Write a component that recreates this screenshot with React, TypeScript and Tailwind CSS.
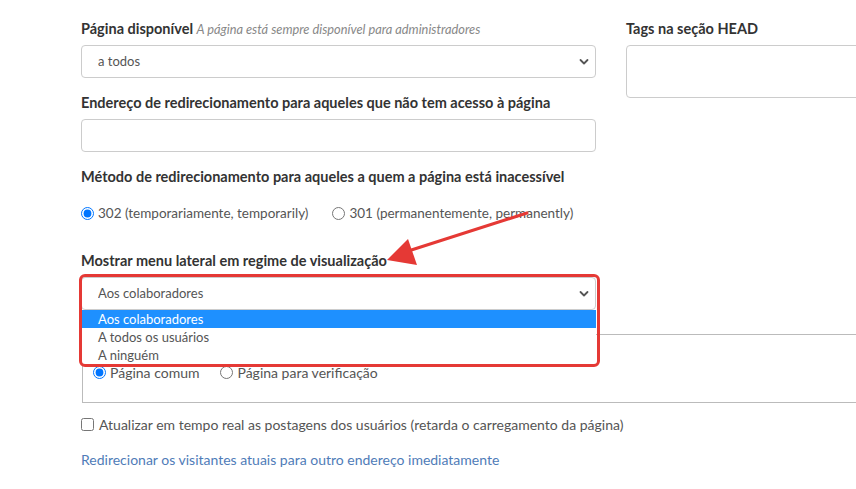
import React from "react";

/** Small chevron drawn on top of the native select */
function Chevron() {
  return (
    <svg
      className="pointer-events-none absolute right-[7px] top-1/2 -translate-y-1/2"
      width="10"
      height="7"
      viewBox="0 0 10 7"
      fill="none"
      aria-hidden="true"
    >
      <path d="M1.5 1.5 5 5l3.5-3.5" stroke="#555" strokeWidth="1.8" strokeLinecap="round" strokeLinejoin="round" />
    </svg>
  );
}

function Label({ children }: { children: React.ReactNode }) {
  return <div className="text-[14.5px] font-bold leading-[18px] text-[#333]">{children}</div>;
}

function Select({ value, options }: { value: string; options: string[] }) {
  return (
    <div className="relative">
      <select
        defaultValue={value}
        className="h-[33px] w-full appearance-none rounded-[4px] border border-[#ccc] bg-white pl-[16px] text-[13px] text-[#555] outline-none"
      >
        {options.map((o) => (
          <option key={o}>{o}</option>
        ))}
      </select>
      <Chevron />
    </div>
  );
}

function Radio({
  name,
  checked,
  size = "text-[14px]",
  children,
}: {
  name: string;
  checked?: boolean;
  size?: string;
  children: React.ReactNode;
}) {
  return (
    <label className={`flex items-center gap-[4px] text-[#555] ${size}`}>
      <input type="radio" name={name} defaultChecked={checked} className="m-0 h-[13px] w-[13px]" />
      <span>{children}</span>
    </label>
  );
}

const sideMenuOptions = ["Aos colaboradores", "A todos os usuários", "A ninguém"];

export default function App() {
  return (
    <div
      className="relative h-[489px] w-[856px] overflow-hidden bg-white"
      style={{ fontFamily: "Lato, 'Open Sans', sans-serif" }}
    >
      <div className="w-[940px] pl-[81px] pt-[20px]">
        {/* Two columns: page settings + HEAD tags */}
        <div className="flex gap-[30px]">
          <div className="w-[515px] shrink-0">
            <Label>
              Página disponível{" "}
              <span className="text-[12.8px] font-normal italic text-[#888]">
                A página está sempre disponível para administradores
              </span>
            </Label>
            <div className="mt-[7px]">
              <Select value="a todos" options={["a todos", "aos usuários registrados"]} />
            </div>

            <div className="mt-[16px]">
              <Label>Endereço de redirecionamento para aqueles que não tem acesso à página</Label>
            </div>
            <input
              type="text"
              className="mt-[7px] block h-[33px] w-full rounded-[4px] border border-[#ccc] bg-white outline-none"
            />

            <div className="mt-[16px]">
              <Label>Método de redirecionamento para aqueles a quem a página está inacessível</Label>
            </div>
            <div className="mt-[18px] flex h-[18px] items-center gap-[24px]">
              <Radio name="redirect" checked size="text-[13.5px]">
                302 (temporariamente, temporarily)
              </Radio>
              <Radio name="redirect" size="text-[13.5px]">
                301 (permanentemente, permanently)
              </Radio>
            </div>

            <div className="mt-[30px]">
              <Label>Mostrar menu lateral em regime de visualização</Label>
            </div>
            <div className="relative mt-[7px]">
              <Select value="Aos colaboradores" options={sideMenuOptions} />
              {/* Opened dropdown list */}
              <div className="absolute left-0 right-0 top-full z-10 bg-white pb-[1px] text-[13px] text-[#555]">
                {sideMenuOptions.map((o, i) => (
                  <div
                    key={o}
                    className={
                      i === 0
                        ? "h-[18px] bg-[#1e90ff] pl-[17px] leading-[18px] text-white"
                        : "h-[18px] pl-[17px] leading-[18px]"
                    }
                  >
                    {o}
                  </div>
                ))}
              </div>
            </div>
          </div>

          <div className="flex-1">
            <Label>Tags na seção HEAD</Label>
            <textarea className="mt-[7px] block h-[53px] w-full resize-none rounded-[4px] border border-[#ccc] bg-white outline-none" />
          </div>
        </div>

        {/* Page type box */}
        <div className="ml-[1px] mt-[24px] h-[69px] border border-[#bbb] pl-[10px] pt-[27px]">
          <div className="flex items-center gap-[21px]">
            <Radio name="type" checked>
              Página comum
            </Radio>
            <Radio name="type">Página para verificação</Radio>
          </div>
        </div>

        <label className="mt-[12px] flex h-[18px] items-center gap-[5px] text-[14px] text-[#555]">
          <input type="checkbox" className="m-0 h-[13px] w-[13px]" />
          <span>Atualizar em tempo real as postagens dos usuários (retarda o carregamento da página)</span>
        </label>

        <a href="#" className="mt-[18px] block text-[14px] leading-[18px] text-[#4f7cb8]">
          Redirecionar os visitantes atuais para outro endereço imediatamente
        </a>
      </div>

      {/* Annotation: red frame around the dropdown */}
      <div className="pointer-events-none absolute left-[79px] top-[274px] z-20 h-[93px] w-[521px] rounded-[6px] border-[3px] border-[#e53935]" />

      {/* Annotation: red arrow */}
      <svg className="pointer-events-none absolute left-0 top-0 z-20" width="856" height="489" aria-hidden="true">
        <line x1="527" y1="213" x2="402" y2="253" stroke="#e53935" strokeWidth="3" strokeLinecap="round" />
        <polygon points="387,260 408,239 417,265" fill="#e53935" />
      </svg>
    </div>
  );
}
